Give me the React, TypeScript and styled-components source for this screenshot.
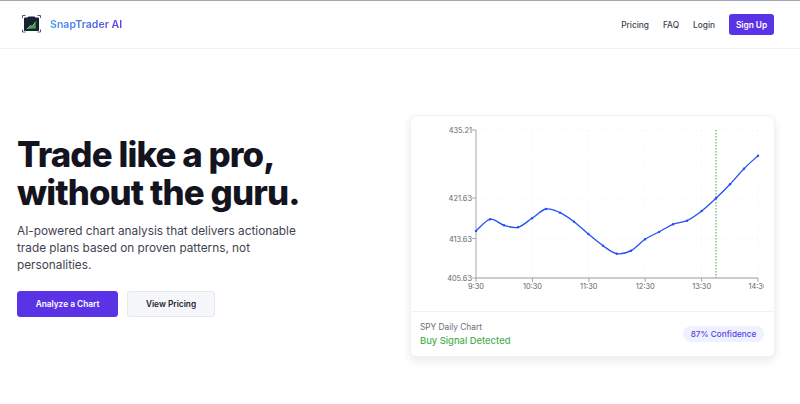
import React from "react";
import styled, { createGlobalStyle } from "styled-components";

const GlobalStyle = createGlobalStyle`
  html, body { margin: 0; padding: 0; background: #fff; }
  body {
    font-family: Inter, "Liberation Sans", sans-serif;
    font-optical-sizing: none;
    color: #14141f;
  }
  * { box-sizing: border-box; }
`;

const Page = styled.div`
  width: 800px;
  height: 404px;
  overflow: hidden;
  border-top: 1px solid #a3a7b3;
`;

const Header = styled.header`
  height: 48px;
  padding: 0 26px 0 22px;
  display: flex;
  align-items: center;
  justify-content: space-between;
  border-bottom: 1px solid #f1f2f4;
`;

const Brand = styled.div`
  display: flex;
  align-items: center;
  gap: 9px;
`;

const LogoMark = styled.svg`
  margin-top: -2px;
`;

const BrandName = styled.span`
  font-size: 10.6px;
  font-weight: 600;
  background: linear-gradient(90deg, #3f9be8, #5b3de8);
  -webkit-background-clip: text;
  background-clip: text;
  color: transparent;
`;

const Nav = styled.nav`
  display: flex;
  align-items: center;
  gap: 14px;
`;

const NavLink = styled.a`
  font-size: 8.3px;
  font-weight: 500;
  color: #3f4350;
`;

const SignUp = styled.button`
  height: 21px;
  width: 45px;
  padding: 0;
  border: 0;
  border-radius: 3px;
  background: #5b33e6;
  color: #fff;
  font: 600 8.3px Inter, sans-serif;
`;

const Hero = styled.main`
  display: grid;
  grid-template-columns: 393px 365px;
  padding: 66px 25px 0 17px;
`;

const Copy = styled.section`
  padding-top: 20px;
`;

const Title = styled.h1`
  margin: 0;
  font-size: 34.8px;
  line-height: 38px;
  font-weight: 800;
  font-variation-settings: "opsz" 14;
  letter-spacing: -0.87px;
  color: #14141f;
`;

const Lead = styled.p`
  margin: 12px 0 0;
  width: 300px;
  font-size: 11.8px;
  line-height: 17px;
  color: #3f4350;
`;

const Actions = styled.div`
  display: flex;
  gap: 9px;
  margin-top: 17px;
`;

const ActionButton = styled.button<{ $primary?: boolean }>`
  height: 26px;
  width: ${(p) => (p.$primary ? "101px" : "88px")};
  padding: 0;
  border-radius: 3px;
  border: 1px solid ${(p) => (p.$primary ? "#5b33e6" : "#e6e8ef")};
  background: ${(p) => (p.$primary ? "#5b33e6" : "#f6f7fb")};
  color: ${(p) => (p.$primary ? "#fff" : "#22242e")};
  font: 600 8.3px Inter, sans-serif;
`;

const Card = styled.section`
  height: 242px;
  border-radius: 6px;
  background: #fff;
  border: 1px solid #f2f2f4;
  box-shadow: 0 4px 10px rgba(20, 20, 40, 0.09);
  display: flex;
  flex-direction: column;
`;

const ChartArea = styled.div`
  height: 196px;
  border-bottom: 1px solid #f1f2f4;
`;

const CardFooter = styled.div`
  flex: 1;
  display: flex;
  align-items: center;
  justify-content: space-between;
  padding: 0 10px 0 9px;
`;

const SymbolName = styled.div`
  font-size: 8.3px;
  line-height: 13px;
  color: #6a6e7a;
`;

const Signal = styled.div`
  font-size: 9.4px;
  line-height: 14px;
  font-weight: 500;
  color: #4caf50;
`;

const Badge = styled.span`
  height: 16px;
  width: 81px;
  display: flex;
  align-items: center;
  justify-content: center;
  border-radius: 8px;
  background: #eef2ff;
  color: #5b3de8;
  font-size: 8.2px;
  font-weight: 500;
`;

const Logo = () => (
  <LogoMark width="19" height="18" viewBox="0 0 19 18" fill="none">
    <path d="M0.5 3V0.5H3.5M15.5 0.5H18.5V3M0.5 14.5V17H3.5M15.5 17H18.5V14.5" stroke="#555a66" strokeWidth="1" />
    <path d="M2 3.5Q2 2.5 3 2.5H5.5L6.5 1.5H12.5L13.5 2.5H16Q17 2.5 17 3.5V15Q17 16 16 16H3Q2 16 2 15z" fill="#18222e" />
    <path d="M5 14l3.5-3.5 1.5 1L13.5 7l.5 6.5z" fill="#3e9a55" />
    <path d="M5 14l3.5-3.5 1.5 1L14 6.5" stroke="#7bd694" strokeWidth="0.9" />
  </LogoMark>
);

// chart coordinates are in page pixels minus the svg origin (411, 116)
const ORIGIN_X = 411;
const ORIGIN_Y = 116;
const POINTS: [number, number][] = [
  [476, 231], [490, 219.3], [504, 225.3], [518, 227.3], [532, 218.3], [546, 209],
  [560, 212.7], [574, 221.7], [588.3, 234], [603, 245.7], [616.7, 253.7], [631, 250.7],
  [645, 239.3], [659, 232], [673, 224.3], [687, 220.7], [701.7, 211], [716, 198.3],
  [730, 184.3], [744, 168.7], [758, 155.7],
].map(([x, y]) => [x - ORIGIN_X, y - ORIGIN_Y] as [number, number]);

const smoothPath = (pts: [number, number][]) => {
  let d = `M${pts[0][0]},${pts[0][1]}`;
  for (let i = 0; i < pts.length - 1; i++) {
    const p0 = pts[i - 1] || pts[i];
    const p1 = pts[i];
    const p2 = pts[i + 1];
    const p3 = pts[i + 2] || p2;
    const c1x = p1[0] + (p2[0] - p0[0]) / 6;
    const c1y = p1[1] + (p2[1] - p0[1]) / 6;
    const c2x = p2[0] - (p3[0] - p1[0]) / 6;
    const c2y = p2[1] - (p3[1] - p1[1]) / 6;
    d += `C${c1x},${c1y},${c2x},${c2y},${p2[0]},${p2[1]}`;
  }
  return d;
};

const LEFT = 65;
const RIGHT = 347;
const TOP = 14;
const BOTTOM = 162;
const X_TICKS = [
  ["9:30", 65],
  ["10:30", 121.4],
  ["11:30", 177.8],
  ["12:30", 234.2],
  ["13:30", 290.6],
  ["14:30", 347],
] as const;
const Y_TICKS = [
  ["435.21", 14],
  ["421.63", 82],
  ["413.63", 122.5],
  ["405.63", 162],
] as const;

const Chart = () => (
  <svg width="353" height="195" viewBox="0 0 353 195" style={{ display: "block" }}>
    <g stroke="#f6f6f6" strokeWidth="1" strokeDasharray="2 3">
      {Y_TICKS.slice(0, 3).map(([l, y]) => (
        <line key={l} x1={LEFT} x2={RIGHT} y1={y} y2={y} />
      ))}
      {X_TICKS.slice(1).map(([l, x]) => (
        <line key={l} x1={x} x2={x} y1={TOP} y2={BOTTOM} />
      ))}
    </g>
    <line x1={LEFT} x2={LEFT} y1={TOP} y2={BOTTOM} stroke="#c4c4c4" strokeWidth="1.5" />
    <line x1={LEFT} x2={RIGHT} y1={BOTTOM} y2={BOTTOM} stroke="#999" strokeWidth="1" />
    {Y_TICKS.map(([l, y]) => (
      <g key={l}>
        <line x1={LEFT - 4} x2={LEFT} y1={y} y2={y} stroke="#888" strokeWidth="0.7" />
        <text x={LEFT - 4} y={y + 3} textAnchor="end" fontSize="7.4" fill="#666">
          {l}
        </text>
      </g>
    ))}
    {X_TICKS.map(([l, x]) => (
      <g key={l}>
        <line x1={x} x2={x} y1={BOTTOM} y2={BOTTOM + 4} stroke="#888" strokeWidth="0.7" />
        <text x={x} y={BOTTOM + 11} textAnchor="middle" fontSize="7.4" fill="#666">
          {l}
        </text>
      </g>
    ))}
    <line x1={305} x2={305} y1={TOP} y2={BOTTOM} stroke="#4caf50" strokeWidth="1.1" strokeDasharray="1.5 1.5" />
    <path d={smoothPath(POINTS)} fill="none" stroke="#2450f5" strokeWidth="1.3" />
    {POINTS.map(([x, y]) => (
      <circle key={x} cx={x} cy={y} r="1.2" fill="#2450f5" />
    ))}
  </svg>
);

const App: React.FC = () => (
  <Page>
    <GlobalStyle />
    <Header>
      <Brand>
        <Logo />
        <BrandName>SnapTrader AI</BrandName>
      </Brand>
      <Nav>
        <NavLink>Pricing</NavLink>
        <NavLink>FAQ</NavLink>
        <NavLink>Login</NavLink>
        <SignUp>Sign Up</SignUp>
      </Nav>
    </Header>
    <Hero>
      <Copy>
        <Title>
          Trade like a pro,
          <br />
          without the guru.
        </Title>
        <Lead>
          AI-powered chart analysis that delivers actionable trade plans based on proven patterns, not personalities.
        </Lead>
        <Actions>
          <ActionButton $primary>Analyze a Chart</ActionButton>
          <ActionButton>View Pricing</ActionButton>
        </Actions>
      </Copy>
      <Card>
        <ChartArea>
          <Chart />
        </ChartArea>
        <CardFooter>
          <div>
            <SymbolName>SPY Daily Chart</SymbolName>
            <Signal>Buy Signal Detected</Signal>
          </div>
          <Badge>87% Confidence</Badge>
        </CardFooter>
      </Card>
    </Hero>
  </Page>
);

export default App;
